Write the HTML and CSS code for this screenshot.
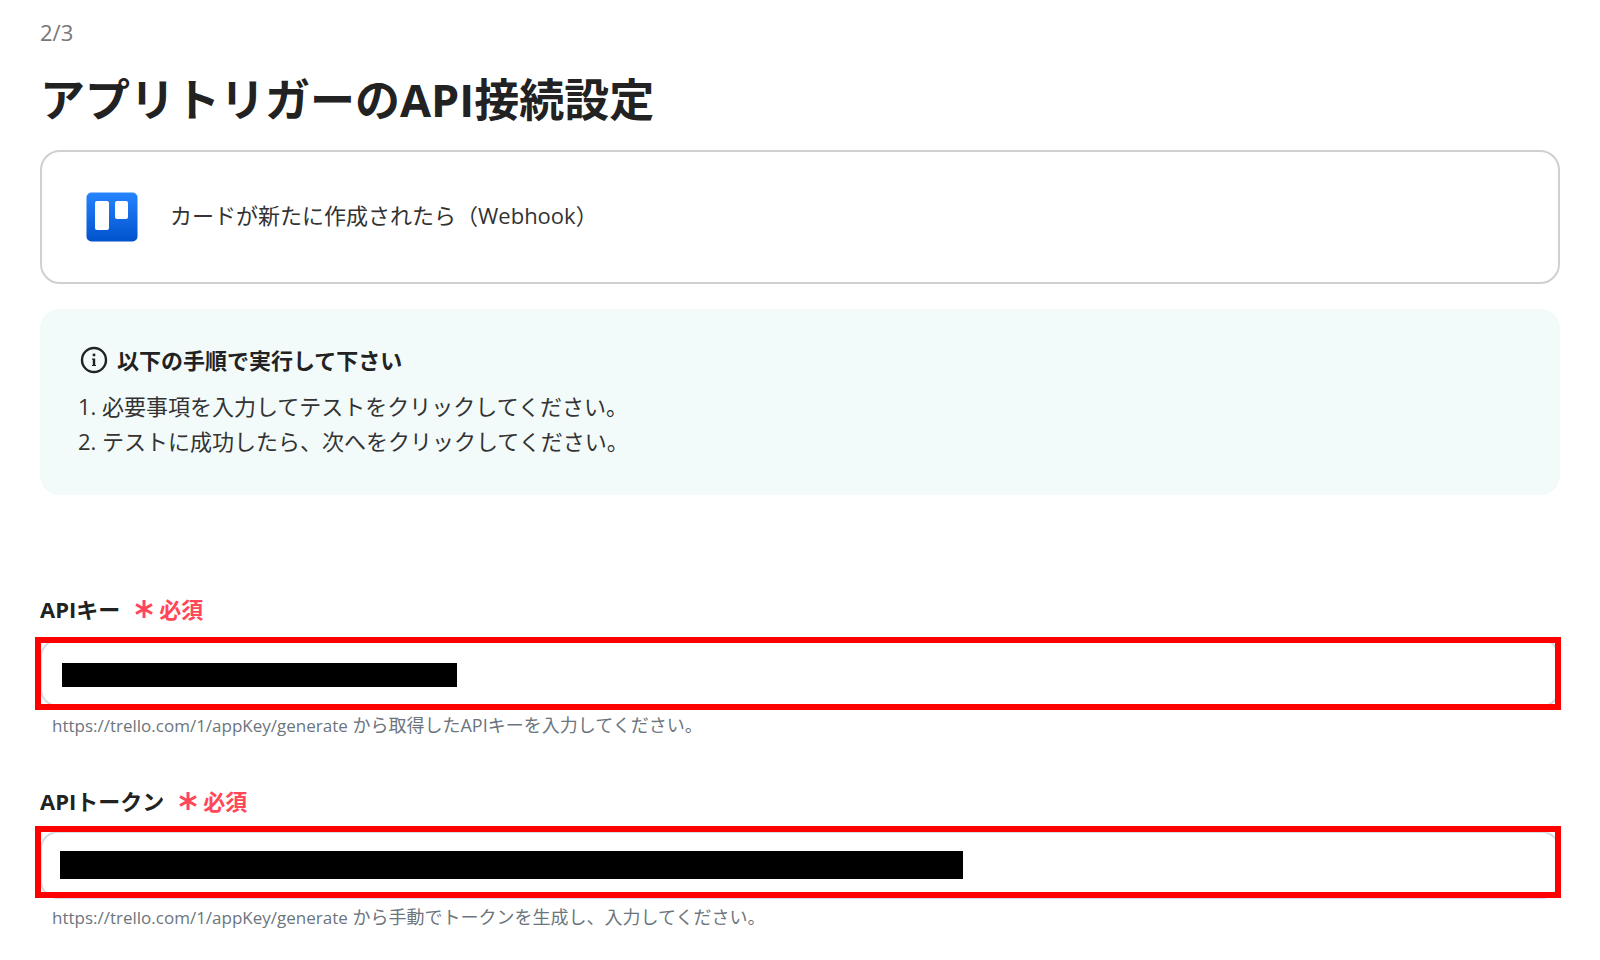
FILE: index.html
```html
<!DOCTYPE html>
<html lang="ja">
<head>
  <meta charset="UTF-8" />
  <meta name="viewport" content="width=device-width, initial-scale=1" />
  <title>アプリトリガーのAPI接続設定</title>
  <link rel="stylesheet" href="styles.css">
</head>
<body>

  <main class="container">

    <p class="step">2/3</p>
    <h1>アプリトリガーのAPI接続設定</h1>

    <div class="app-card">
      <svg class="app-logo" viewBox="0 0 52 50" aria-hidden="true">
        <defs>
          <linearGradient id="logo-bg" x1="0" y1="0" x2="0" y2="1">
            <stop offset="0" stop-color="#2684ff" />
            <stop offset="1" stop-color="#0052cc" />
          </linearGradient>
        </defs>
        <rect x="0.5" y="0.5" width="51" height="49" rx="5" fill="url(#logo-bg)" />
        <rect x="9" y="9" width="14" height="29" rx="2" fill="#fff" />
        <rect x="29" y="9" width="13" height="18" rx="2" fill="#fff" />
      </svg>
      <span class="app-name">カードが新たに作成されたら（Webhook）</span>
    </div>

    <section class="info">
      <h2>
        <svg class="info-icon" viewBox="0 0 28 28" aria-hidden="true">
          <circle cx="14" cy="14" r="12" fill="none" stroke="currentColor" stroke-width="2.4" />
          <rect x="12.7" y="7.6" width="2.6" height="2.6" fill="currentColor" />
          <path d="M12 12.6H15.2V19H16V20H12V19H12.8V13.8H12Z" fill="currentColor" />
        </svg>
        以下の手順で実行して下さい
      </h2>
      <ol>
        <li>必要事項を入力してテストをクリックしてください。</li>
        <li>テストに成功したら、次へをクリックしてください。</li>
      </ol>
    </section>

    <form class="fields">
      <div class="field">
        <div class="field-label">
          <label for="api-key">APIキー</label>
          <span class="required">
            <svg class="asterisk" viewBox="0 0 18 18" aria-hidden="true">
              <path d="M9 0V18M1 4.5L17 13.5M17 4.5L1 13.5" />
            </svg>
            必須
          </span>
        </div>
        <div class="input-box">
          <input type="text" id="api-key" required aria-describedby="api-key-help" />
          <span class="mask mask-key"></span>
        </div>
        <p class="help" id="api-key-help"><span class="help-url">https://trello.com/1/appKey/generate</span> から取得したAPIキーを入力してください。</p>
      </div>

      <div class="field">
        <div class="field-label">
          <label for="api-token">APIトークン</label>
          <span class="required">
            <svg class="asterisk" viewBox="0 0 18 18" aria-hidden="true">
              <path d="M9 0V18M1 4.5L17 13.5M17 4.5L1 13.5" />
            </svg>
            必須
          </span>
        </div>
        <div class="input-box input-box-token">
          <input type="text" id="api-token" required aria-describedby="api-token-help" />
          <span class="mask mask-token"></span>
        </div>
        <p class="help" id="api-token-help"><span class="help-url">https://trello.com/1/appKey/generate</span> から手動でトークンを生成し、入力してください。</p>
      </div>
    </form>

  </main>

</body>
</html>
```
FILE: styles.css
```css
:root {
  --text-color: #222;
  --body-color: #333;
  --muted-color: #6c757d;
  --required-color: #ff4757;
  --mark-color: #f00;
  --info-bg: #f2fbfa;
  --font-main: "Open Sans", "Noto Sans CJK JP", sans-serif;
}

* {
  box-sizing: border-box;
}

body {
  margin: 0;
  font-family: var(--font-main);
  font-size: 22px;
  line-height: 36px;
  background: #fff;
  color: var(--text-color);
}

h1, h2, p, ol {
  margin: 0;
}

.container {
  padding: 14px 40px;
}

.step {
  color: #777;
}

h1 {
  margin-top: 18px;
  font-size: 45px;
  line-height: 64px;
}

.app-card {
  display: flex;
  align-items: center;
  gap: 32px;
  margin-top: 18px;
  padding: 40px 44px;
  border: 2px solid #d0d0d0;
  border-radius: 20px;
}

.app-logo {
  width: 52px;
  height: 50px;
}

.app-name {
  padding-bottom: 4px;
  color: var(--body-color);
}

.info {
  margin-top: 25px;
  padding: 33px 40px 36px;
  border-radius: 20px;
  background: var(--info-bg);
}

.info h2 {
  display: flex;
  align-items: center;
  gap: 9px;
  margin-bottom: 11px;
  font-size: 22px;
}

.info-icon {
  width: 28px;
  height: 28px;
}

.info ol {
  padding-left: 22px;
  line-height: 35px;
  color: var(--body-color);
}

.fields {
  display: flex;
  flex-direction: column;
  gap: 40px;
  margin-top: 96px;
}

.field-label {
  display: flex;
  gap: 15px;
  margin-bottom: 12px;
  font-weight: bold;
}

.required {
  display: flex;
  align-items: center;
  gap: 6px;
  color: var(--required-color);
}

.asterisk {
  width: 18px;
  height: 18px;
  fill: none;
  stroke: currentColor;
  stroke-width: 3;
}

.input-box {
  position: relative;
}

.input-box input {
  display: block;
  width: 100%;
  height: 68px;
  padding: 0 20px;
  border: 2px solid #d5dce2;
  border-radius: 18px;
  font: inherit;
  color: inherit;
}

/* red marker around the field */
.input-box::after {
  content: "";
  position: absolute;
  inset: -2px -1px -3px -5px;
  border: 6px solid var(--mark-color);
  pointer-events: none;
}

.input-box-token::after {
  inset: -5px -1px 1px -5px;
}

.mask {
  position: absolute;
  top: 24px;
  left: 22px;
  height: 24px;
  max-width: 90%;
  background: #000;
}

.mask-key {
  width: 395px;
}

.mask-token {
  top: 20px;
  left: 20px;
  width: 903px;
  height: 28px;
}

.help {
  padding: 1px 12px 0;
  font-size: 18px;
  line-height: 34px;
  color: var(--muted-color);
}

.help-url {
  font-size: 17px;
}
```
